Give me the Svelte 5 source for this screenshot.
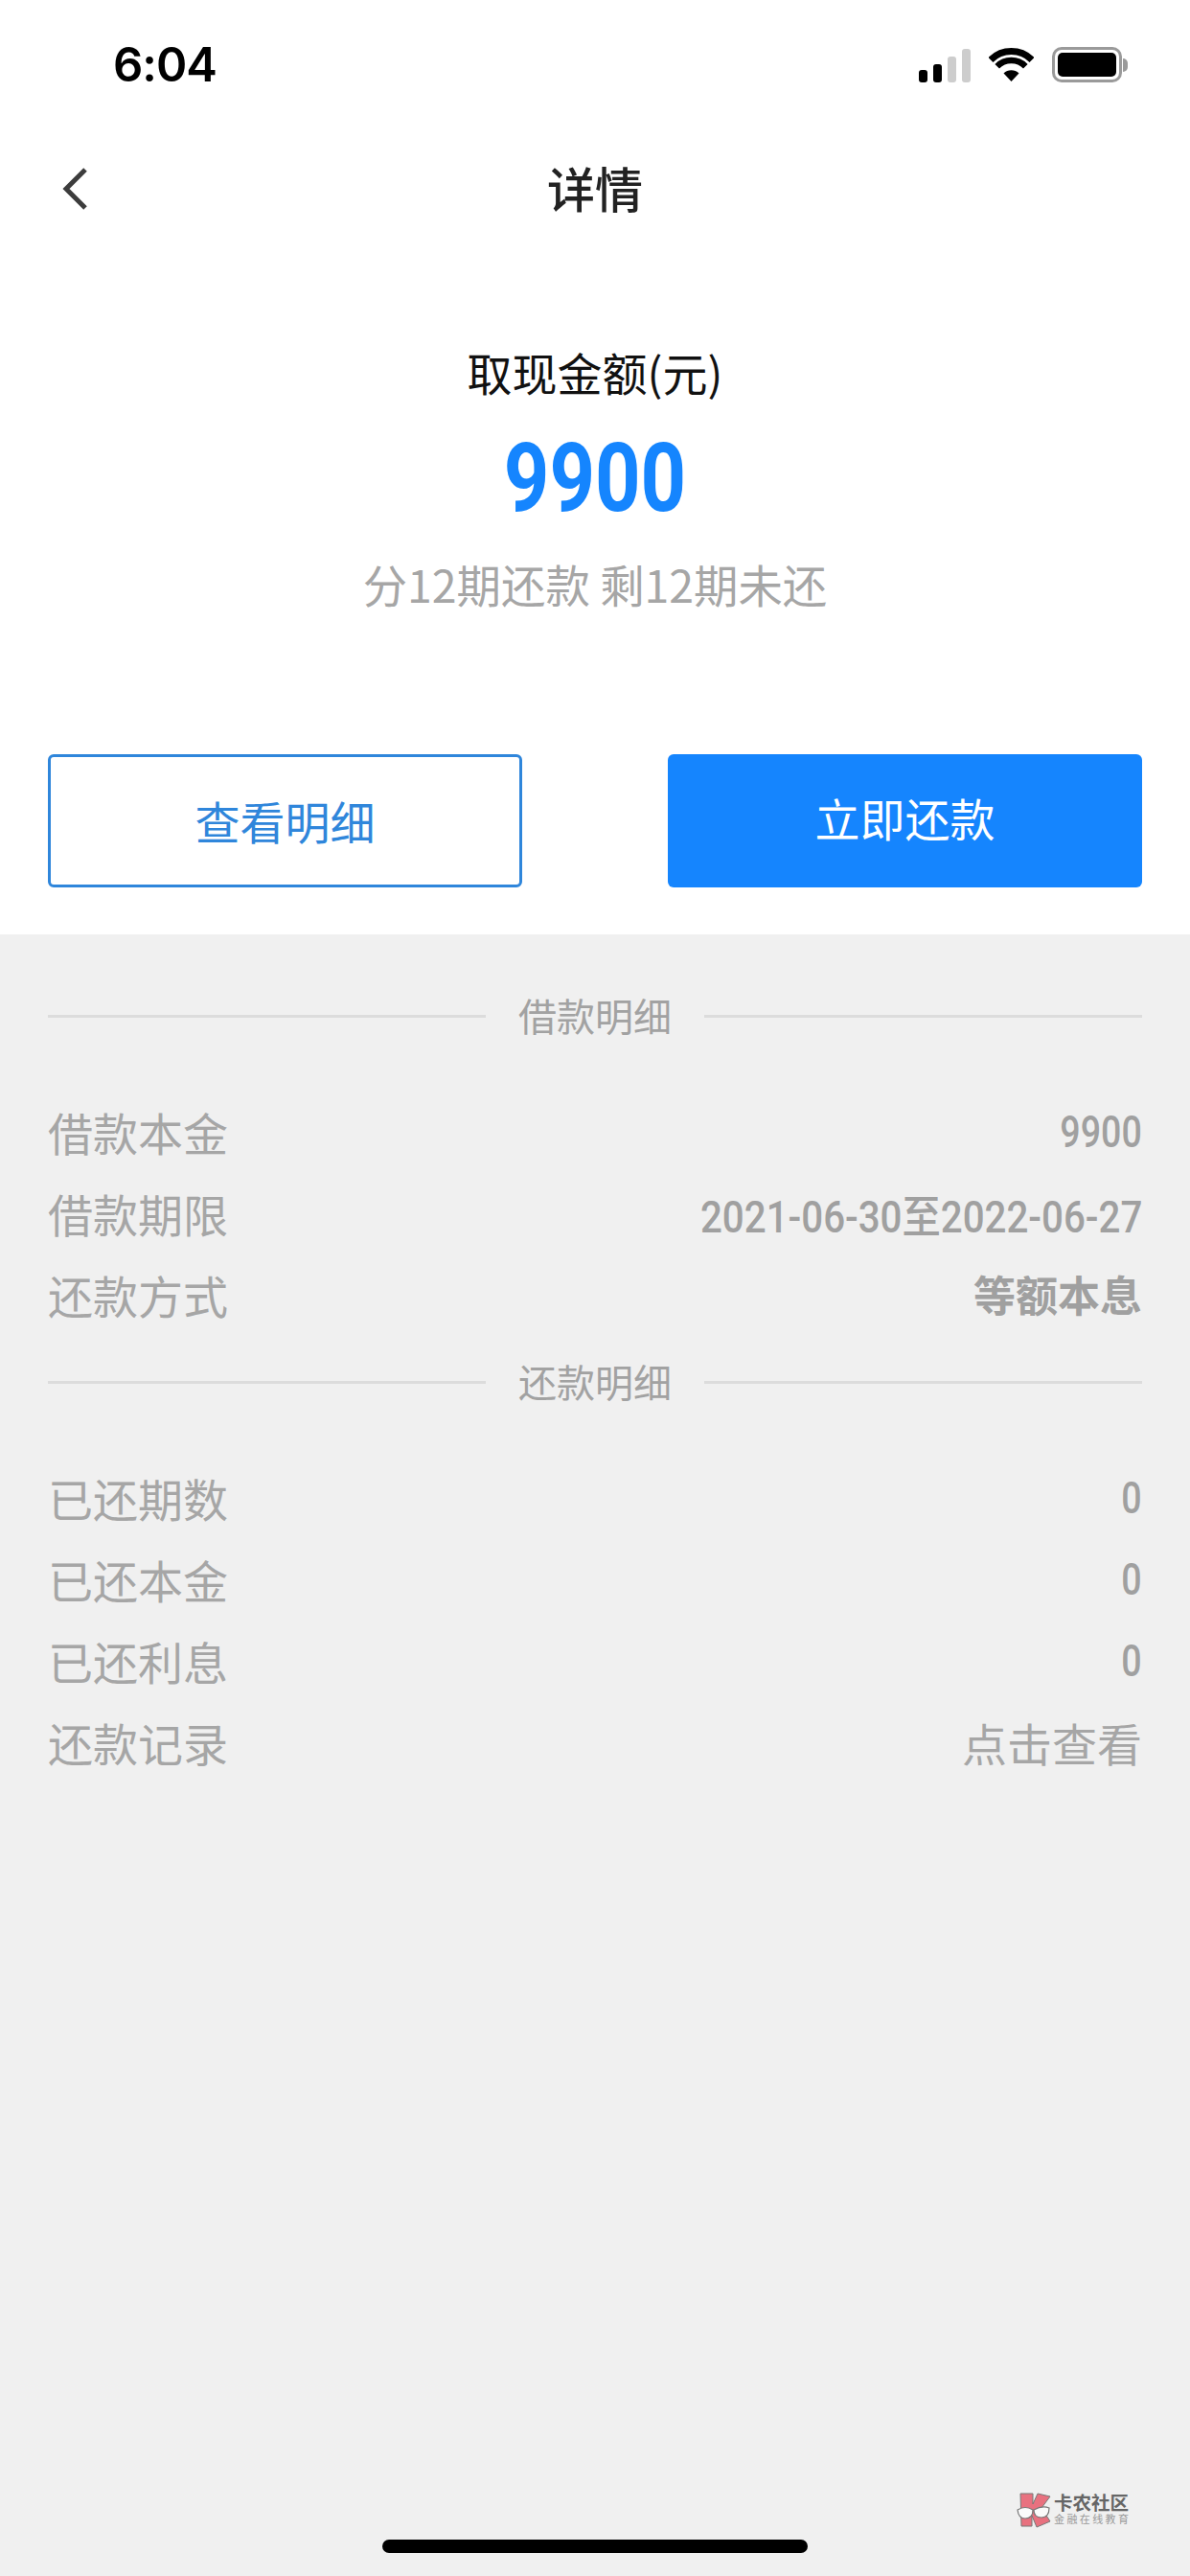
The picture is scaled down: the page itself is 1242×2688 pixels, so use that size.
<script>
  const loan = [
    { label: '借款本金', value: '9900', kind: 'num' },
    { label: '借款期限', value: '2021-06-30至2022-06-27', kind: 'num date' },
    { label: '还款方式', value: '等额本息', kind: 'bold' }
  ];
  const repay = [
    { label: '已还期数', value: '0', kind: 'num' },
    { label: '已还本金', value: '0', kind: 'num' },
    { label: '已还利息', value: '0', kind: 'num' },
    { label: '还款记录', value: '点击查看', kind: '' }
  ];
</script>

{#snippet section(title, rows)}
  <div class="divider">
    <span class="line"></span>
    <span class="divider-text">{title}</span>
    <span class="line"></span>
  </div>
  <div class="rows">
    {#each rows as r}
      <div class="row">
        <span>{r.label}</span>
        <span class={r.kind}>{r.value}</span>
      </div>
    {/each}
  </div>
{/snippet}

<div class="page">
  <div class="top">
    <div class="status">
      <span class="time">6:04</span>
      <div class="icons">
        <div class="signal">
          <i class="b1"></i><i class="b2"></i><i class="b3"></i><i class="b4"></i>
        </div>
        <svg class="wifi" width="47" height="36" viewBox="0 0 47 36">
          <path d="M2 13.4A30.5 30.5 0 0 1 45 13.4" fill="none" stroke="#000" stroke-width="7" />
          <path d="M8.7 20.2A21 21 0 0 1 38.3 20.2" fill="none" stroke="#000" stroke-width="6.5" />
          <path d="M23.5 36L15.5 27.5A11.5 11.5 0 0 1 31.5 27.5Z" fill="#000" />
        </svg>
        <div class="battery"><div class="cell"></div></div>
        <div class="nub"></div>
      </div>
    </div>

    <div class="nav">
      <svg class="back" width="32" height="46" viewBox="0 0 32 46">
        <path d="M27 3L7 23L27 43" fill="none" stroke="#3c3c3c" stroke-width="5" />
      </svg>
      <span class="title">详情</span>
    </div>

    <div class="summary">
      <div class="cash-label">取现金额(元)</div>
      <div class="amount">9900</div>
      <div class="periods">分12期还款 剩12期未还</div>
    </div>

    <div class="actions">
      <div class="btn outline">查看明细</div>
      <div class="btn solid">立即还款</div>
    </div>
  </div>

  <div class="details">
    {@render section('借款明细', loan)}
    <div class="gap"></div>
    {@render section('还款明细', repay)}
  </div>

  <div class="watermark">
    <svg width="38" height="38" viewBox="0 0 38 38">
      <path d="M5 2H18V13L23 2L36 5L27 17L36 31L22 37L17 25V36H6Z" fill="#e8717f" stroke="#777" stroke-width="1" />
      <path d="M2 19Q10 14 18 19Q18 28 10 28Q3 28 2 19ZM19 19Q28 14 35 17Q35 27 27 27Q19 27 19 19Z" fill="#fafafa" stroke="#777" stroke-width="1.2" />
    </svg>
    <div class="wm-text">
      <div class="wm-name">卡农社区</div>
      <div class="wm-sub">金融在线教育</div>
    </div>
  </div>
  <div class="home"></div>
</div>

<style>
  :global(body) { margin: 0; background: #f0f0f0; }
  .page {
    position: relative;
    width: 1242px;
    height: 2688px;
    overflow: hidden;
    background: #f0f0f0;
    font-family: "Noto Sans CJK SC", "Liberation Sans", sans-serif;
    color: #a6a6a6;
  }
  .top { background: #fff; height: 975px; }

  .status { height: 136px; display: flex; justify-content: space-between; padding: 49px 65px 0 118px; box-sizing: border-box; }
  .time { font: 600 49px/37px Inter, "Liberation Sans", sans-serif; color: #000; letter-spacing: -1px; }
  .icons { display: flex; align-items: flex-start; height: 37px; }
  .signal { display: flex; align-items: flex-end; gap: 6px; height: 36px; margin-top: 1px; margin-right: 19px; }
  .signal i { display: block; width: 9px; border-radius: 3px; background: #000; }
  .signal .b1 { height: 13px; }
  .signal .b2 { height: 19px; }
  .signal .b3 { height: 27px; background: #cdcdcd; }
  .signal .b4 { height: 35px; background: #cdcdcd; }
  .wifi { margin-right: 19px; }
  .battery { width: 73px; height: 37px; box-sizing: border-box; border: 3px solid #9a9a9a; border-radius: 10px; padding: 3px; }
  .cell { width: 100%; height: 100%; background: #000; border-radius: 5px; }
  .nub { width: 5px; height: 14px; margin: 12px 0 0 1px; background: #9a9a9a; border-radius: 0 7px 7px 0; }

  .nav { position: relative; height: 122px; display: flex; align-items: center; justify-content: center; }
  .back { position: absolute; left: 62px; top: 38px; }
  .title { font-size: 50px; font-weight: 500; color: #222; line-height: 60px; margin-bottom: 4px; }

  .summary { padding-top: 100px; text-align: center; }
  .cash-label { font-size: 47px; line-height: 60px; color: #111; }
  .amount {
    margin-top: 26px;
    font: 700 100px/110px Roboto, "Liberation Sans", sans-serif;
    color: #1585fe;
    transform: scaleX(0.83);
  }
  .periods { margin-top: 25px; font-size: 46.4px; line-height: 60px; color: #a6a6a6; }

  .actions { margin-top: 148px; padding: 0 50px; display: flex; justify-content: space-between; }
  .btn { width: 495px; height: 139px; box-sizing: border-box; border-radius: 6px; display: flex; align-items: center; justify-content: center; font-size: 47px; }
  .outline { border: 3px solid #2f86db; color: #2f86db; padding-bottom: 2px; }
  .solid { background: #1585fe; color: #fff; padding-bottom: 8px; }

  .details { padding: 60px 50px 0; }
  .divider { display: flex; align-items: center; height: 50px; }
  .line { flex: 1; height: 3px; background: #dcdcdc; }
  .divider-text { width: 228px; text-align: center; font-size: 40px; line-height: 50px; color: #a2a2a2; margin-bottom: 2px; }
  .rows { margin-top: 56px; }
  .row { display: flex; justify-content: space-between; align-items: center; height: 85px; padding-bottom: 7px; box-sizing: border-box; font-size: 47px; color: #a6a6a6; }
  .num { font-family: Roboto, "Noto Sans CJK SC", sans-serif; font-weight: 500; font-size: 47px; color: #a0a0a0; transform: scaleX(0.8); transform-origin: right center; }
  .date { transform: scaleX(0.857); }
  .bold { font-size: 44px; font-weight: 700; color: #a0a0a0; }
  .gap { height: 21px; }

  .watermark { position: absolute; left: 1060px; top: 2600px; display: flex; gap: 2px; }
  .wm-text { width: 80px; }
  .wm-name { font-size: 19.5px; line-height: 21px; font-weight: 700; color: #666; white-space: nowrap; }
  .wm-sub { font-size: 11px; line-height: 13px; letter-spacing: 2.4px; color: #999; white-space: nowrap; margin-top: 1px; }
  .home { position: absolute; left: 399px; top: 2650px; width: 444px; height: 14px; border-radius: 7px; background: #000; }
</style>
